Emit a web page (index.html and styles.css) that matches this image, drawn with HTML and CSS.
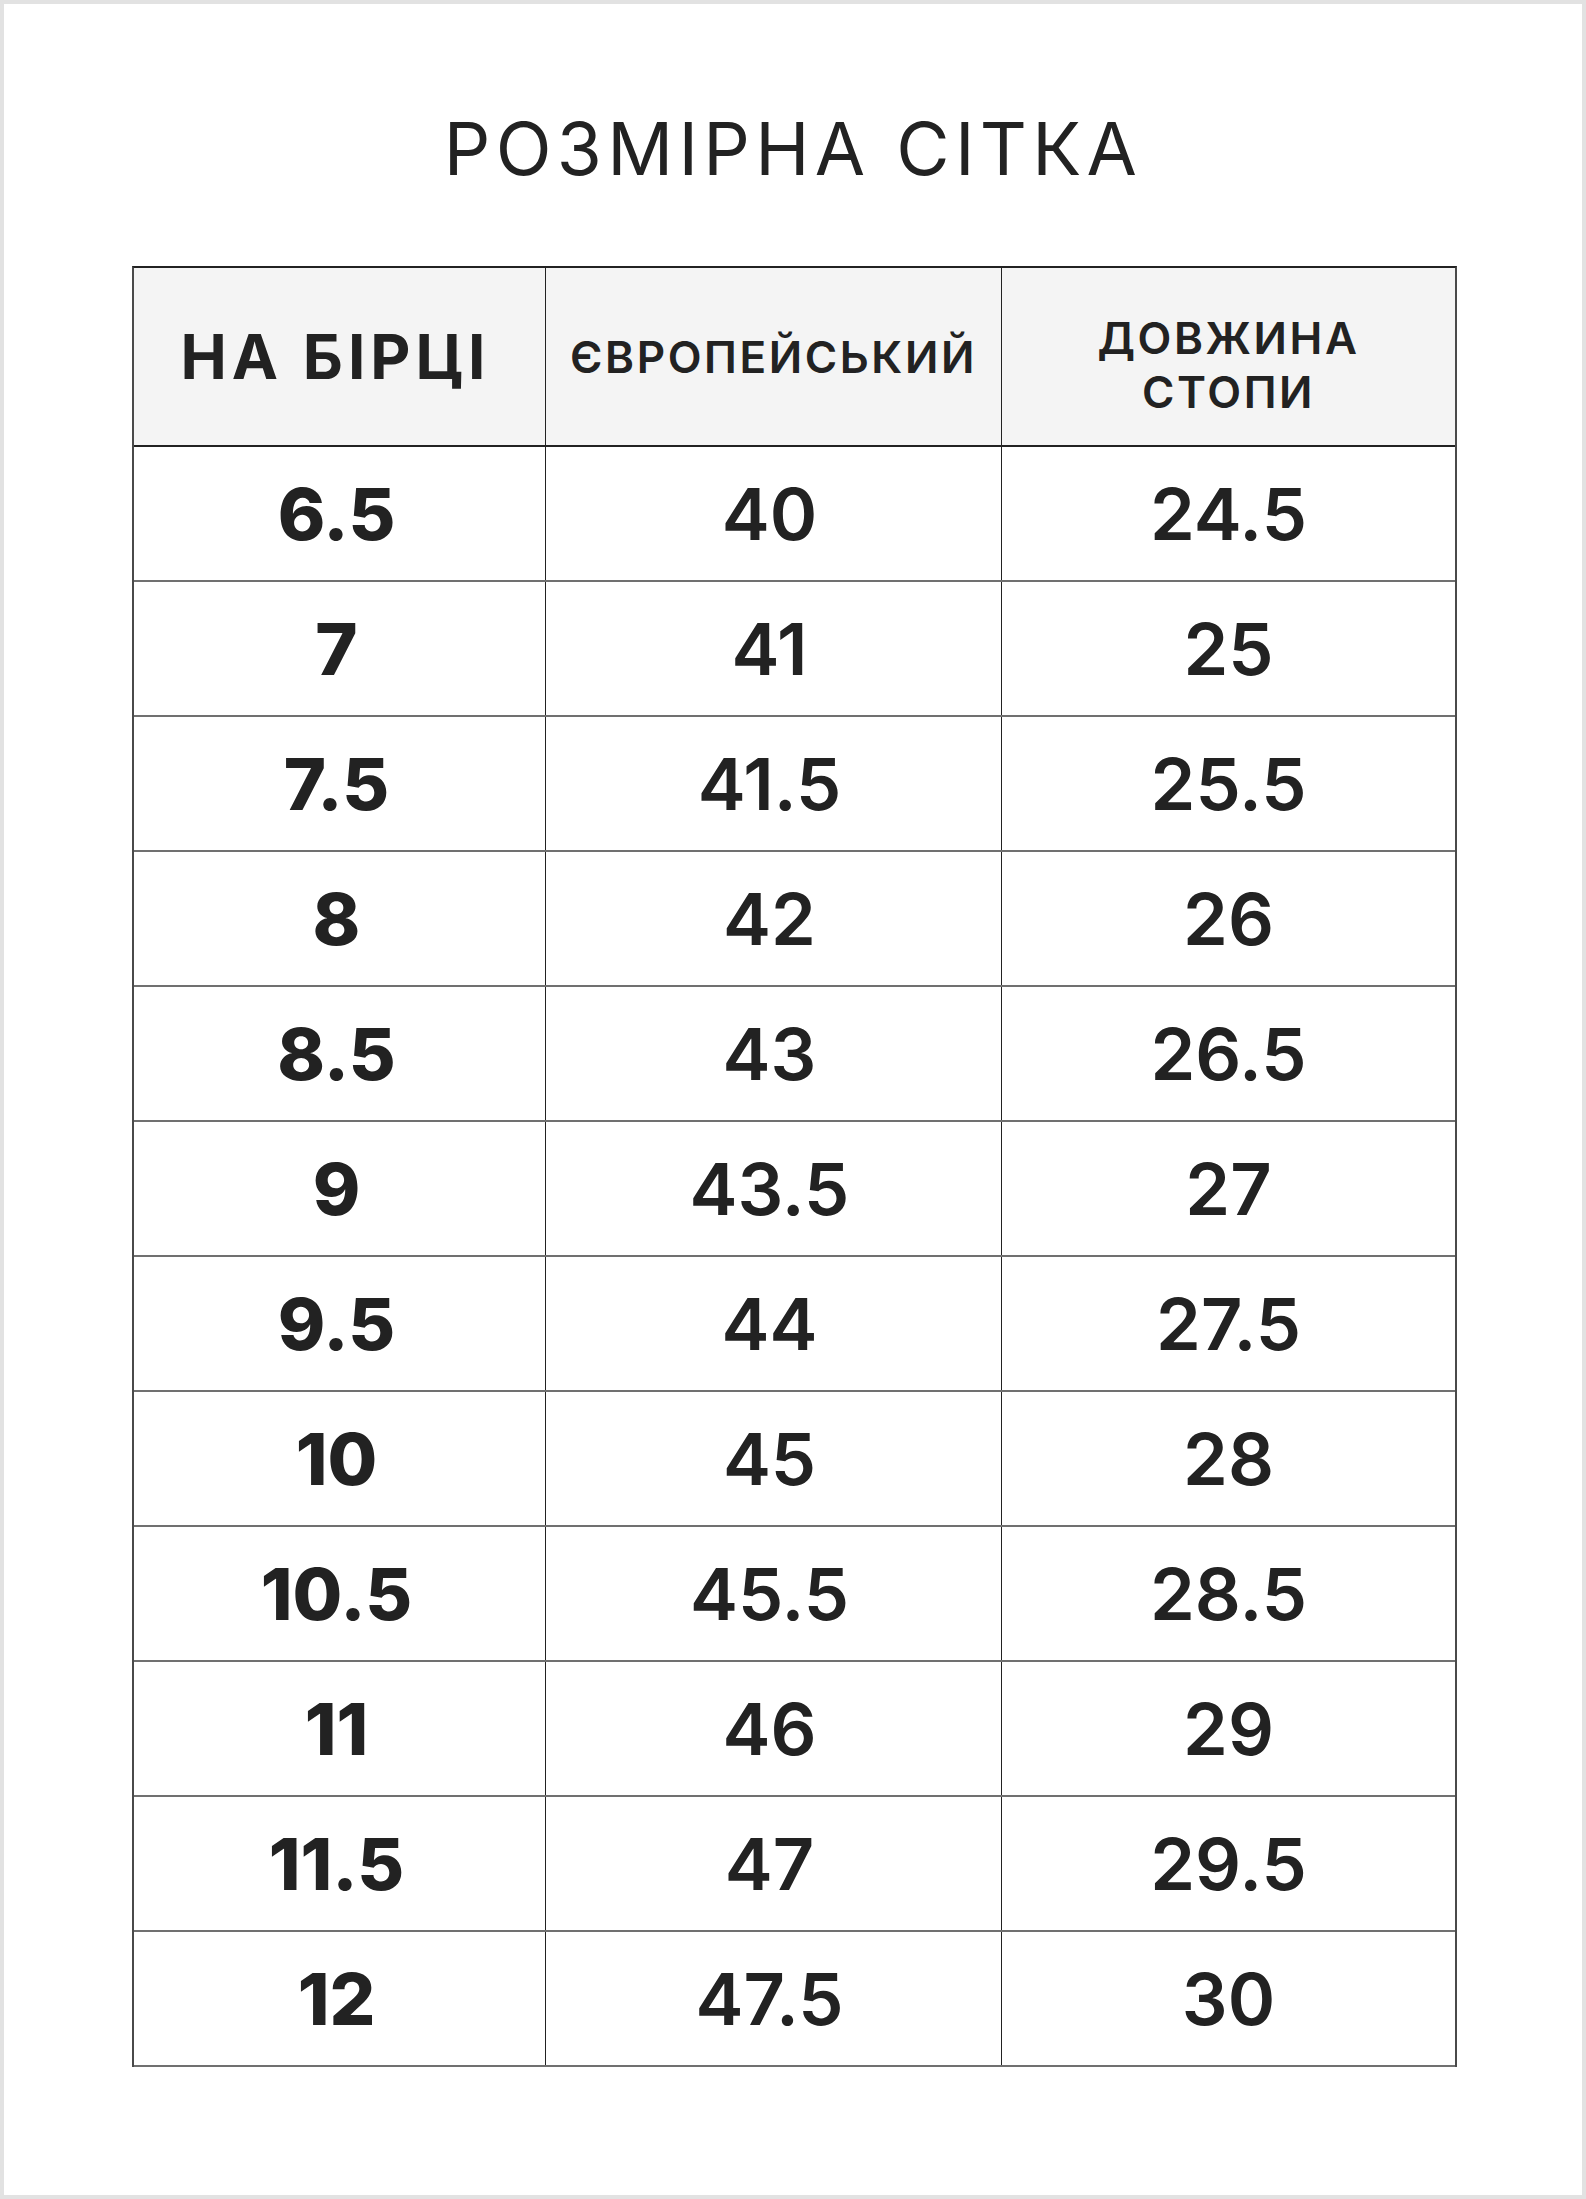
FILE: index.html
```html
<!DOCTYPE html>
<html lang="uk">
<head>
<meta charset="utf-8">
<title>Розмірна сітка</title>
<link rel="stylesheet" href="styles.css">
</head>
<body>
<div class="page">
  <h1 class="title">РОЗМІРНА СІТКА</h1>
  <div class="sheet">
    <div class="head">
      <div class="hcell"><span class="h-big">НА БІРЦІ</span></div>
      <div class="hcell"><span class="h-small">ЄВРОПЕЙСЬКИЙ</span></div>
      <div class="hcell"><span class="h-small h-two">ДОВЖИНА<br>СТОПИ</span></div>
    </div>
    <div class="row"><div class="cell c1">6.5</div><div class="cell c2">40</div><div class="cell">24.5</div></div>
    <div class="row"><div class="cell c1">7</div><div class="cell c2">41</div><div class="cell">25</div></div>
    <div class="row"><div class="cell c1">7.5</div><div class="cell c2">41.5</div><div class="cell">25.5</div></div>
    <div class="row"><div class="cell c1">8</div><div class="cell c2">42</div><div class="cell">26</div></div>
    <div class="row"><div class="cell c1">8.5</div><div class="cell c2">43</div><div class="cell">26.5</div></div>
    <div class="row"><div class="cell c1">9</div><div class="cell c2">43.5</div><div class="cell">27</div></div>
    <div class="row"><div class="cell c1">9.5</div><div class="cell c2">44</div><div class="cell">27.5</div></div>
    <div class="row"><div class="cell c1">10</div><div class="cell c2">45</div><div class="cell">28</div></div>
    <div class="row"><div class="cell c1">10.5</div><div class="cell c2">45.5</div><div class="cell">28.5</div></div>
    <div class="row"><div class="cell c1">11</div><div class="cell c2">46</div><div class="cell">29</div></div>
    <div class="row"><div class="cell c1">11.5</div><div class="cell c2">47</div><div class="cell">29.5</div></div>
    <div class="row"><div class="cell c1">12</div><div class="cell c2">47.5</div><div class="cell">30</div></div>
  </div>
</div>
</body>
</html>
```
FILE: styles.css
```css
html, body {
  margin: 0;
  padding: 0;
  background: #ffffff;
}

.page {
  box-sizing: border-box;
  width: 1586px;
  height: 2199px;
  border: 4px solid #e2e2e2;
  background: #ffffff;
  padding-top: 108px;
  font-family: "Inter", "DejaVu Sans", sans-serif;
  color: #222222;
}

.title {
  margin: 0;
  font-size: 73px;
  line-height: 1;
  font-weight: 400;
  letter-spacing: 5.3px;
  text-align: center;
  padding-left: 8px;
  padding-right: 8px;
}

.sheet {
  box-sizing: border-box;
  width: 1325px;
  margin: 81px 0 0 128px;
  border-top: 2px solid #222222;
  border-left: 2px solid #4a4a4a;
  border-right: 2px solid #4a4a4a;
}

.head,
.row {
  display: grid;
  grid-template-columns: 412px 456px 453px;
}

.head {
  height: 179px;
  box-sizing: border-box;
  background: #f4f4f4;
  border-bottom: 2px solid #222222;
}

.row {
  height: 135px;
  box-sizing: border-box;
  border-bottom: 2px solid #707070;
}

.hcell,
.cell {
  box-sizing: border-box;
  display: flex;
  align-items: center;
  justify-content: center;
  text-align: center;
  border-right: 1px solid #222222;
}

.hcell:last-child,
.cell:last-child {
  border-right: none;
}

.h-big {
  font-size: 62px;
  font-weight: 700;
  letter-spacing: 5px;
  line-height: 1;
  padding-right: 8px;
}

.h-small {
  font-size: 44px;
  font-weight: 600;
  letter-spacing: 2.6px;
  line-height: 54px;
}

.h-two {
  padding-top: 16px;
}

.cell {
  font-size: 72px;
  font-weight: 600;
  line-height: 1;
  letter-spacing: 0;
}

.cell.c1 {
  font-weight: 800;
  padding-right: 6px;
}

.cell.c2 {
  padding-right: 8px;
}
```
